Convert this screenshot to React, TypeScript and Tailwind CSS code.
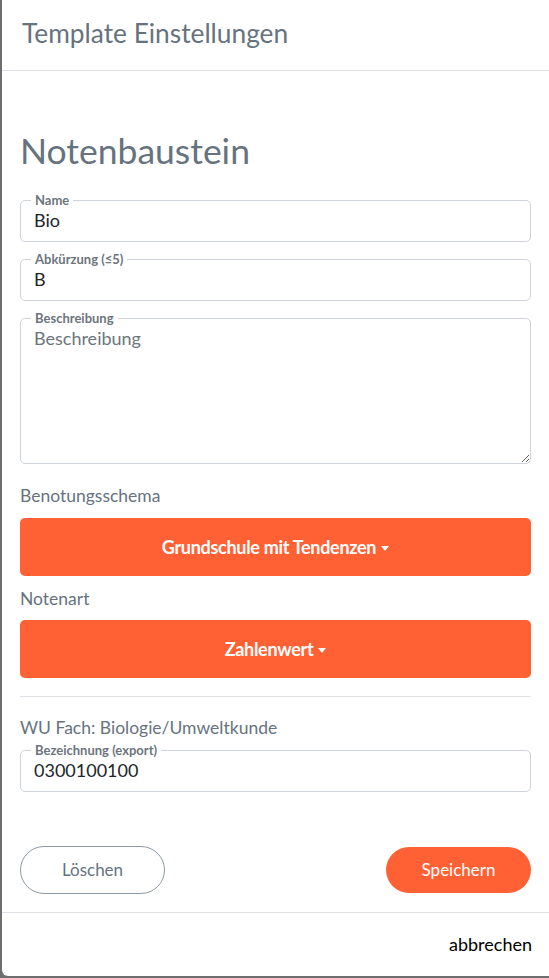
import React from 'react';

const font = { fontFamily: 'Lato, "Open Sans", sans-serif' };

function Field({ label, value }: { label: string; value: string }) {
    return (
        <fieldset className="min-w-0 border border-[#ced4da] rounded-[5px] px-[13px] pt-[2px] pb-[10px]">
            <legend className="ml-[-3px] px-1 text-[13px] leading-[14px] font-bold text-[#6c757d]">{label}</legend>
            <div className="text-[18px] leading-[22px] text-[#212529]">{value}</div>
        </fieldset>
    );
}

function Caret() {
    return <span className="inline-block ml-[5px] align-[3px] border-t-[5px] border-x-[4.5px] border-x-transparent border-t-white" />;
}

export default function App() {
    return (
        <div className="w-[549px] h-[978px] bg-[#6e6e6e] pl-[2px] pb-[2px]" style={font}>
            <div className="h-full bg-white rounded-bl-[6px] flex flex-col">
                {/* header */}
                <header className="h-[71px] shrink-0 border-b border-[#dee2e6] flex items-center px-5">
                    <h5 className="text-[26.3px] text-[#66737f] leading-none pb-[4px]">Template Einstellungen</h5>
                </header>

                <div className="flex-1 px-[18px] pt-[58px]">
                    <h2 className="text-[35.5px] leading-[44px] text-[#66737f] mb-[20px]">Notenbaustein</h2>

                    <div className="flex flex-col gap-[10px]">
                        <Field label="Name" value="Bio" />
                        <Field label="Abkürzung (≤5)" value="B" />
                        <fieldset className="min-w-0 border border-[#ced4da] rounded-[5px] p-0">
                            <legend className="ml-[10px] px-1 text-[13px] leading-[14px] font-bold text-[#6c757d]">Beschreibung</legend>
                            <textarea
                                placeholder="Beschreibung"
                                className="block w-full h-[138px] resize-y px-[13px] pt-[2px] text-[18px] leading-[22px] text-[#212529] placeholder:text-[#6c757d] outline-none bg-transparent"
                                style={font}
                            />
                        </fieldset>
                    </div>

                    <div className="mt-[21px] text-[17.5px] leading-[21px] text-[#66737f]">Benotungsschema</div>
                    <button className="mt-[12px] w-full h-[58px] rounded-[5px] bg-[#ff6134] text-white text-[18px] font-bold tracking-[-0.3px]">
                        Grundschule mit Tendenzen<Caret />
                    </button>

                    <div className="mt-[12px] text-[17.5px] leading-[21px] text-[#66737f]">Notenart</div>
                    <button className="mt-[11px] w-full h-[58px] rounded-[5px] bg-[#ff6134] text-white text-[18px] font-bold tracking-[-0.3px]">
                        Zahlenwert<Caret />
                    </button>

                    <hr className="mt-[18px] border-t border-[#dee2e6]" />

                    <div className="mt-[20px] mb-[5px] text-[17.5px] leading-[21px] text-[#66737f]">WU Fach: Biologie/Umweltkunde</div>
                    <Field label="Bezeichnung (export)" value="0300100100" />

                    <div className="mt-[54px] flex items-center justify-between">
                        <button className="w-[145px] h-[48px] rounded-full border border-[#8e9aa6] text-[17px] text-[#66737f]">Löschen</button>
                        <button className="w-[145px] h-[46px] rounded-full bg-[#ff6134] text-[17px] text-white">Speichern</button>
                    </div>
                </div>

                <footer className="h-[64px] shrink-0 border-t border-[#dee2e6] flex items-center justify-end px-[17px]">
                    <span className="text-[18px] text-black">abbrechen</span>
                </footer>
            </div>
        </div>
    );
}
